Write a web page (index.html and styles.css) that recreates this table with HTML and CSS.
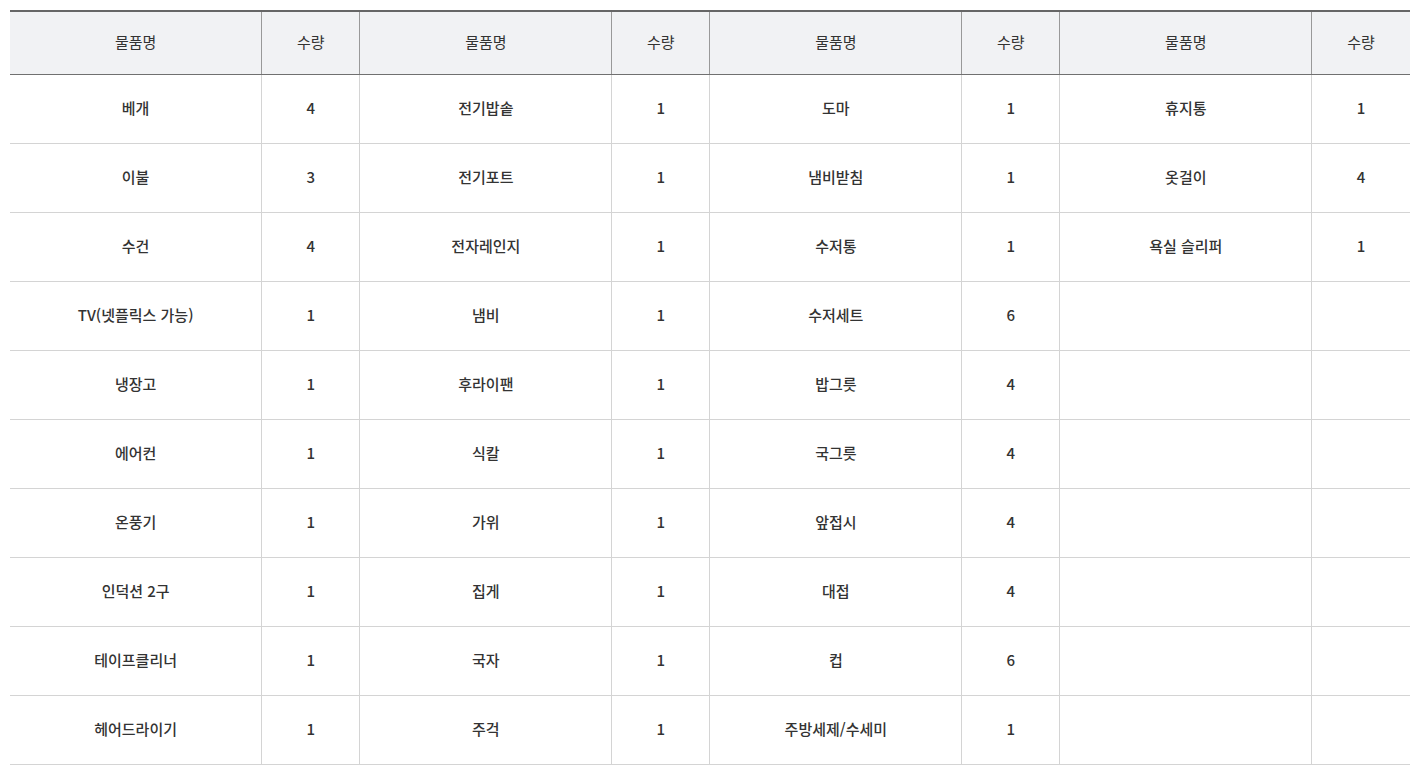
FILE: index.html
```html
<!DOCTYPE html>
<html lang="ko">
<head>
<meta charset="utf-8">
<link rel="stylesheet" href="styles.css">
</head>
<body>
<table class="items">
  <colgroup>
    <col class="c-name"><col class="c-qty">
    <col class="c-name"><col class="c-qty">
    <col class="c-name"><col class="c-qty">
    <col class="c-name"><col class="c-qty">
  </colgroup>
  <thead>
    <tr>
      <th>물품명</th><th>수량</th><th>물품명</th><th>수량</th><th>물품명</th><th>수량</th><th>물품명</th><th>수량</th>
    </tr>
  </thead>
  <tbody>
    <tr><td>베개</td><td>4</td><td>전기밥솥</td><td>1</td><td>도마</td><td>1</td><td>휴지통</td><td>1</td></tr>
    <tr><td>이불</td><td>3</td><td>전기포트</td><td>1</td><td>냄비받침</td><td>1</td><td>옷걸이</td><td>4</td></tr>
    <tr><td>수건</td><td>4</td><td>전자레인지</td><td>1</td><td>수저통</td><td>1</td><td>욕실 슬리퍼</td><td>1</td></tr>
    <tr><td>TV(넷플릭스 가능)</td><td>1</td><td>냄비</td><td>1</td><td>수저세트</td><td>6</td><td></td><td></td></tr>
    <tr><td>냉장고</td><td>1</td><td>후라이팬</td><td>1</td><td>밥그릇</td><td>4</td><td></td><td></td></tr>
    <tr><td>에어컨</td><td>1</td><td>식칼</td><td>1</td><td>국그릇</td><td>4</td><td></td><td></td></tr>
    <tr><td>온풍기</td><td>1</td><td>가위</td><td>1</td><td>앞접시</td><td>4</td><td></td><td></td></tr>
    <tr><td>인덕션 2구</td><td>1</td><td>집게</td><td>1</td><td>대접</td><td>4</td><td></td><td></td></tr>
    <tr><td>테이프클리너</td><td>1</td><td>국자</td><td>1</td><td>컵</td><td>6</td><td></td><td></td></tr>
    <tr><td>헤어드라이기</td><td>1</td><td>주걱</td><td>1</td><td>주방세제/수세미</td><td>1</td><td></td><td></td></tr>
  </tbody>
</table>
</body>
</html>
```

FILE: styles.css
```css
html, body {
  margin: 0;
  padding: 0;
  background: #fff;
}
body {
  padding: 10px 14px 0 10px;
  font-family: "Noto Sans CJK KR", "Noto Sans", sans-serif;
  color: #333;
}
.items {
  width: 1400px;
  border-collapse: collapse;
  table-layout: fixed;
  border-top: 2px solid #666;
}
.c-name { width: 251px; }
.c-qty { width: 98px; }
.items th {
  height: 58px;
  padding: 0 0 4px;
  background: #f1f2f4;
  font-size: 15px;
  font-weight: 400;
  color: #333;
  text-align: center;
  border-bottom: 1px solid #707070;
  border-left: 1px solid #999;
}
.items td {
  height: 64px;
  padding: 0 0 4px;
  font-size: 15px;
  font-weight: 500;
  color: #333;
  text-align: center;
  border-bottom: 1px solid #d4d4d4;
  border-left: 1px solid #d4d4d4;
}
.items th:first-child,
.items td:first-child {
  border-left: none;
}
```
